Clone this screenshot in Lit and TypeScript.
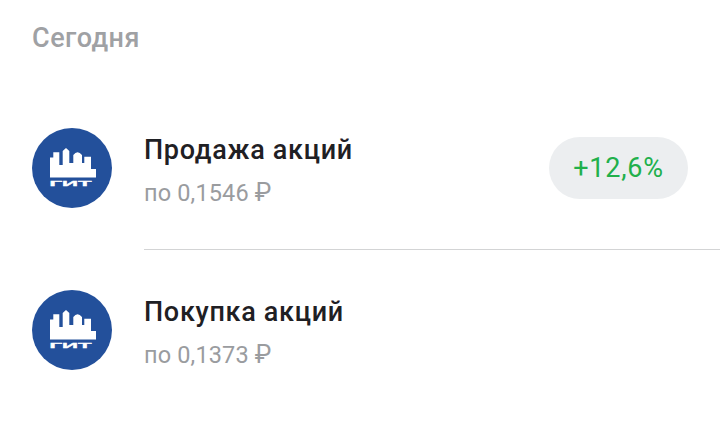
import { LitElement, html, css, svg } from "lit";
import { customElement } from "lit/decorators.js";

const logo = svg`<svg class="logo" viewBox="0 0 80 80" width="80" height="80" aria-hidden="true">
  <circle cx="40" cy="40" r="40" fill="#23509b"/>
  <path fill="#fff" d="M18 49.500V29.500H21.300V24.300H27.300V37H30.700V23L34 20 37.300 23V35H41.300V27Q45.500 21.500 50 27V35H52.300V28.700H59V41H64V49.500Z"/>
  <text x="38.500" y="57.800" text-anchor="middle" textLength="42" lengthAdjust="spacingAndGlyphs" fill="#fff" stroke="#fff" stroke-width="0.3" font-family="Liberation Sans" font-weight="700" font-size="8">ГИТ</text>
</svg>`;

@customElement("app-root")
export class AppRoot extends LitElement {
  static styles = css`
    :host {
      display: block;
      width: 720px;
      height: 430px;
      background: #fff;
      font-family: Roboto, sans-serif;
      overflow: hidden;
    }
    .head {
      padding: 22px 32px 0;
      height: 66px;
      box-sizing: border-box;
      font-size: 27px;
      line-height: 32px;
      font-weight: 500;
      letter-spacing: 0.5px;
      color: #9fa1a4;
    }
    .row {
      display: flex;
      align-items: center;
      height: 160px;
      padding: 0 32px;
      box-sizing: border-box;
    }
    .row.first { margin-top: 22px; margin-bottom: 1px; }
    .logo { flex: none; display: block; }
    .body { flex: 1; margin-left: 32px; padding-top: 4px; }
    .title {
      font-size: 27px;
      line-height: 32px;
      font-weight: 500;
      color: #1f2024;
      letter-spacing: 0.7px;
    }
    .sub {
      margin-top: 13px;
      font-size: 23.5px;
      line-height: 28px;
      letter-spacing: 0.15px;
      color: #9a9c9f;
      white-space: nowrap;
    }
    .rub { font-size: 25px; }
    .pill {
      width: 139px;
      height: 62px;
      border-radius: 31px;
      background: #eceef0;
      color: #21b04b;
      font-size: 27px;
      letter-spacing: 0.8px;
      display: flex;
      align-items: center;
      justify-content: center;
    }
    .divider {
      height: 1px;
      margin-left: 144px;
      background: #d3d4d5;
    }
  `;

  private row(title: string, sub: string, pill?: string, first = false) {
    return html`<div class="row ${first ? "first" : ""}">
      ${logo}
      <div class="body">
        <div class="title">${title}</div>
        <div class="sub">${sub} <span class="rub">₽</span></div>
      </div>
      ${pill ? html`<div class="pill">${pill}</div>` : null}
    </div>`;
  }

  render() {
    return html`
      <div class="head">Сегодня</div>
      ${this.row("Продажа акций", "по 0,1546", "+12,6%", true)}
      <div class="divider"></div>
      ${this.row("Покупка акций", "по 0,1373")}
    `;
  }
}
